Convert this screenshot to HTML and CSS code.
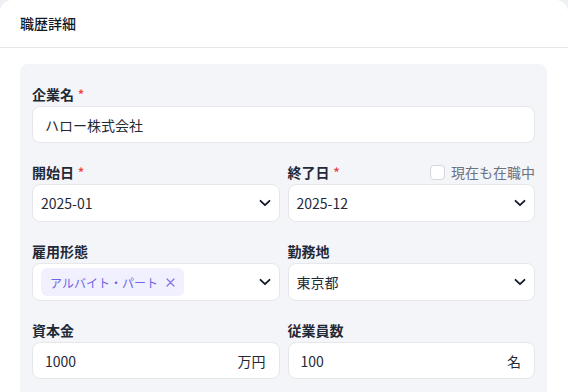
FILE: index.html
```html
<!DOCTYPE html>
<html lang="ja">
<head>
<meta charset="utf-8">
<link rel="stylesheet" href="styles.css">
</head>
<body>
<div class="card">
  <div class="card-header">職歴詳細</div>
  <div class="panel">
    <div class="grid">
      <div class="field span2">
        <div class="label-row"><span class="label">企業名</span><span class="req">*</span></div>
        <div class="input text">ハロー株式会社</div>
      </div>

      <div class="field">
        <div class="label-row"><span class="label">開始日</span><span class="req">*</span></div>
        <div class="input select"><span>2025-01</span>
          <svg class="chev" width="12" height="8" viewBox="0 0 12 8"><path d="M1.5 1.8 L6 6.2 L10.5 1.8" fill="none" stroke="#111827" stroke-width="1.8" stroke-linecap="round" stroke-linejoin="round"/></svg>
        </div>
      </div>
      <div class="field">
        <div class="label-row">
          <span class="label">終了日</span><span class="req">*</span>
          <span class="current"><span class="checkbox"></span><span class="current-text">現在も在職中</span></span>
        </div>
        <div class="input select"><span>2025-12</span>
          <svg class="chev" width="12" height="8" viewBox="0 0 12 8"><path d="M1.5 1.8 L6 6.2 L10.5 1.8" fill="none" stroke="#111827" stroke-width="1.8" stroke-linecap="round" stroke-linejoin="round"/></svg>
        </div>
      </div>

      <div class="field">
        <div class="label-row"><span class="label">雇用形態</span></div>
        <div class="input select multi">
          <span class="tag">アルバイト・パート
            <svg class="tag-x" width="9" height="9" viewBox="0 0 9 9"><path d="M1 1 L8 8 M8 1 L1 8" stroke="#7c73e6" stroke-width="1.2" stroke-linecap="round"/></svg>
          </span>
          <svg class="chev" width="12" height="8" viewBox="0 0 12 8"><path d="M1.5 1.8 L6 6.2 L10.5 1.8" fill="none" stroke="#111827" stroke-width="1.8" stroke-linecap="round" stroke-linejoin="round"/></svg>
        </div>
      </div>
      <div class="field">
        <div class="label-row"><span class="label">勤務地</span></div>
        <div class="input select"><span>東京都</span>
          <svg class="chev" width="12" height="8" viewBox="0 0 12 8"><path d="M1.5 1.8 L6 6.2 L10.5 1.8" fill="none" stroke="#111827" stroke-width="1.8" stroke-linecap="round" stroke-linejoin="round"/></svg>
        </div>
      </div>

      <div class="field">
        <div class="label-row"><span class="label">資本金</span></div>
        <div class="input text suffix"><span>1000</span><span>万円</span></div>
      </div>
      <div class="field">
        <div class="label-row"><span class="label">従業員数</span></div>
        <div class="input text suffix"><span>100</span><span>名</span></div>
      </div>
    </div>
  </div>
</div>
</body>
</html>
```

FILE: styles.css
```css
* { box-sizing: border-box; }
html, body {
  margin: 0;
  padding: 0;
  background: #eef0f3;
}
body {
  font-family: "Noto Sans CJK JP", "Noto Sans", sans-serif;
  color: #1f2937;
  font-size: 14px;
  width: 568px;
  height: 392px;
  overflow: hidden;
}
.card {
  background: #ffffff;
  border-radius: 12px 12px 0 0;
  height: 392px;
}
.card-header {
  height: 48px;
  padding: 0 20px;
  display: flex;
  align-items: center;
  border-bottom: 1px solid #e6e7ea;
  font-size: 14px;
  font-weight: 500;
  color: #111827;
  padding-bottom: 1px;
}
.panel {
  margin: 16px 21px 0 20px;
  background: #f4f5f9;
  border-radius: 8px 8px 0 0;
  padding: 20px 12px 20px 12px;
  height: 330px;
}
.grid {
  display: grid;
  grid-template-columns: 1fr 1fr;
  column-gap: 8px;
  row-gap: 19px;
}
.span2 { grid-column: span 2; }
.field { display: flex; flex-direction: column; }
.label-row {
  display: flex;
  align-items: center;
  height: 20px;
  margin-bottom: 2px;
}
.label {
  font-size: 14px;
  font-weight: 700;
  line-height: 20px;
  color: #1f2937;
}
.req {
  color: #ef4444;
  font-size: 12px;
  font-weight: 700;
  margin-left: 4px;
  line-height: 20px;
}
.current {
  margin-left: auto;
  display: flex;
  align-items: center;
  gap: 6px;
}
.checkbox {
  width: 15px;
  height: 15px;
  border: 1px solid #d4d6dc;
  border-radius: 4px;
  background: #ffffff;
}
.current-text {
  color: #6b7280;
  font-size: 14px;
  line-height: 20px;
}
.input {
  background: #ffffff;
  border: 1px solid #e5e7eb;
  border-radius: 8px;
  display: flex;
  align-items: center;
  font-size: 14px;
  color: #1f2937;
}
.input.text {
  height: 37px;
  padding: 0 13px 0 12px;
}
.input.select {
  height: 38px;
  padding: 0 8px 0 8px;
  justify-content: space-between;
}
.input.suffix { justify-content: space-between; }
.chev { display: block; }
.tag {
  display: flex;
  align-items: center;
  height: 28px;
  padding: 0 9px 0 9px;
  background: #f0f0fe;
  border-radius: 6px;
  color: #6f66e6;
  font-size: 12px;
  gap: 8px;
}
.tag-x { display: block; }
```
